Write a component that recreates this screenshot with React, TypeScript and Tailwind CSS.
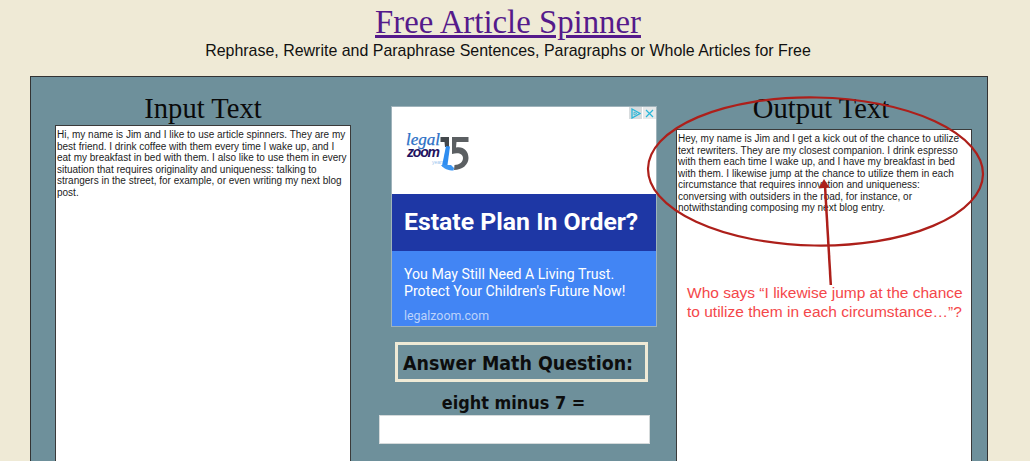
export default function App() {
  const ta = "bg-white border border-[#3a3a3a] h-[400px] w-[296px] pl-[1px] pr-[1px] pt-[3px] text-[#1c1c1c] text-[10px] leading-[11.55px] font-['Liberation_Sans',Arial,sans-serif]";
  const head = "font-['Liberation_Serif','Times_New_Roman',serif] text-[28.6px] leading-[33px] text-[#0a0a0a] text-center";
  const cond = "font-['DejaVu_Sans_Condensed','DejaVu_Sans',Verdana,sans-serif] font-bold text-[#0d0d0d]";
  return (
    <div className="relative h-[461px] w-[1030px] overflow-hidden bg-[#efead6]">
      <div className="pt-[3px] pr-[14px] text-center">
        <a href="#" className="font-['Liberation_Serif','Times_New_Roman',serif] text-[32.8px] leading-[38px] text-[#551a8b] underline">Free Article Spinner</a>
        <p className="mt-[1px] font-['Liberation_Sans',Arial,sans-serif] text-[15.96px] leading-[18px] text-[#111]">Rephrase, Rewrite and Paraphrase Sentences, Paragraphs or Whole Articles for Free</p>
      </div>
      <div className="ml-[30px] mt-[16px] h-[500px] w-[958px] border border-[#333] bg-[#6e909b] pl-[24px] pt-[15px] flex items-start">
        <div className="w-[296px] shrink-0">
          <h2 className={head}>Input Text</h2>
          <div className={ta}>Hi, my name is Jim and I like to use article spinners. They are my best friend. I drink coffee with them every time I wake up, and I eat my breakfast in bed with them. I also like to use them in every situation that requires originality and uniqueness: talking to strangers in the street, for example, or even writing my next blog post.</div>
        </div>
        <div className="ml-[28px] w-[271px] shrink-0 flex flex-col items-center">
          <div className="relative mt-[14px] ml-[12px] w-[266px] h-[221px] border border-[#9fb3bb] bg-white flex flex-col font-['Roboto',Arial,sans-serif] text-white self-start">
            <div className="flex-1 flex items-start pl-[14px] pt-[22px]">
              <svg width="66" height="45" viewBox="0 -3 66 45">
                <text x="0" y="13" fontFamily="Liberation Serif" fontStyle="italic" fontSize="17" fill="#2b6fc6" stroke="#2b6fc6" strokeWidth="0.25">legal</text>
                <text x="1" y="24.5" fontFamily="Liberation Sans" fontStyle="italic" fontWeight="700" fontSize="14" letterSpacing="-1.2" fill="#23125f">zoom</text>
                <text x="26" y="32" fontFamily="Liberation Sans" fontSize="5" fill="#9cc4ee">years</text>
                <path d="M34.5 5H43V15H39L38.5 10H34.5z" fill="#43484c" />
                <path d="M40 14L44 14.5L41.5 33L36 34z" fill="#2f8df0" />
                <path d="M35 33L45 33L48 36L47.5 38.5C42 38.5 38 37 35 33z" fill="#3d96f2" />
                <path d="M46 5H62.5V10H50.5L50 15.5C57 14 62.5 18.5 62.5 26C62.5 33 56 38 48 38L48.5 33C53.5 33 57 30 57 26C57 21.5 52 20 46 22z" fill="#5b5f62" />
              </svg>
            </div>
            <div className="h-[57px] bg-[#1e37a5] flex items-center pl-[12px] text-[24.8px] font-bold leading-none">Estate Plan In Order?</div>
            <div className="h-[75px] bg-[#4285f4] pl-[12px] pt-[15px]">
              <p className="text-[14.15px] leading-[17px]">You May Still Need A Living Trust.<br />Protect Your Children's Future Now!</p>
              <p className="mt-[8px] text-[12.4px] leading-[16px] text-[#bcd3fb]">legalzoom.com</p>
            </div>
            <div className="absolute right-0 top-0 flex gap-[1px]">
              <span className="w-[13px] h-[12px] bg-[#d8dcde] flex items-center justify-center">
                <svg width="11" height="11" viewBox="0 0 11 11" fill="none" stroke="#29b6d8" strokeWidth="1.3"><path d="M2 1l8 4.5L2 10z" /><path d="M4 4l3 1.5L4 7z" strokeWidth="0.8" /></svg>
              </span>
              <span className="w-[13px] h-[12px] bg-[#e6e9ea] flex items-center justify-center">
                <svg width="9" height="9" viewBox="0 0 9 9" stroke="#29b6d8" strokeWidth="1.2"><path d="M1 1l7 7M8 1l-7 7" /></svg>
              </span>
            </div>
          </div>
          <div className={"mt-[15px] ml-[14px] w-[253px] h-[40px] shrink-0 border-[3px] border-[#efead6] pl-[5px] pt-[3px] flex items-center whitespace-nowrap text-[19.4px] " + cond}>Answer Math Question:</div>
          <div className={"mt-[11px] -ml-[2px] text-[17.9px] leading-[20px] " + cond}>eight minus 7 =</div>
          <div className="mt-[2px] h-[29px] w-[271px] bg-white border border-[#d5dadb]"></div>
        </div>
        <div className="ml-[26px] w-[296px] shrink-0">
          <h2 className={head + " -ml-[6px] mb-[4px]"}>Output Text</h2>
          <div className={ta}>Hey, my name is Jim and I get a kick out of the chance to utilize text rewriters. They are my closest companion. I drink espresso with them each time I wake up, and I have my breakfast in bed with them. I likewise jump at the chance to utilize them in each circumstance that requires innovation and uniqueness: conversing with outsiders in the road, for instance, or notwithstanding composing my next blog entry.</div>
        </div>
      </div>
      <svg className="absolute left-0 top-0 pointer-events-none" width="1030" height="461" fill="none">
        <ellipse cx="815.5" cy="171.5" rx="167.5" ry="74" stroke="#ad1f1a" strokeWidth="2.2" transform="rotate(1 815.5 171.5)" />
        <path d="M830.8 285 L825 186" stroke="#ad1f1a" strokeWidth="2.5" />
        <path d="M824 179 L818.5 188.5 L829.5 187.5z" fill="#ad1f1a" />
      </svg>
      <div className="absolute left-[687px] top-[283px] text-[15.5px] leading-[19px] text-[#f4474a] whitespace-nowrap font-['Liberation_Sans',Arial,sans-serif]">Who says “I likewise jump at the chance<br />to utilize them in each circumstance…”?</div>
    </div>
  );
}
